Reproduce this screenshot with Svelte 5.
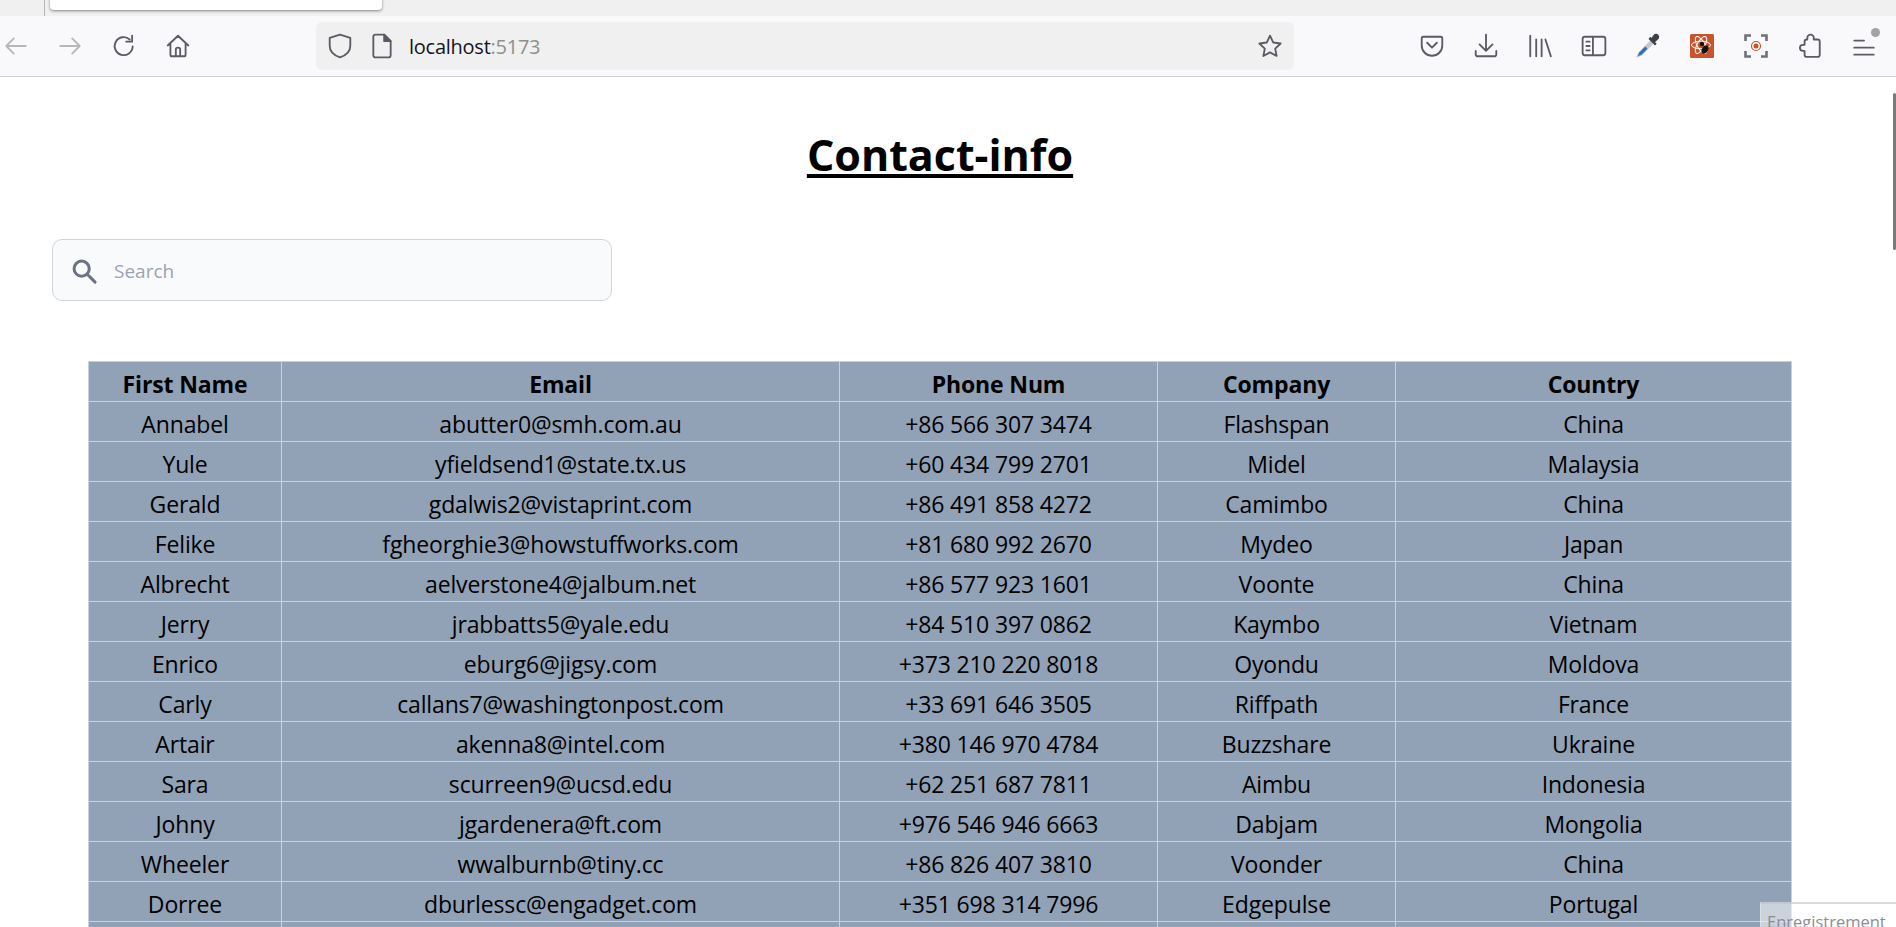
<script>
  const contacts = [
    ["Annabel", "abutter0@smh.com.au", "+86 566 307 3474", "Flashspan", "China"],
    ["Yule", "yfieldsend1@state.tx.us", "+60 434 799 2701", "Midel", "Malaysia"],
    ["Gerald", "gdalwis2@vistaprint.com", "+86 491 858 4272", "Camimbo", "China"],
    ["Felike", "fgheorghie3@howstuffworks.com", "+81 680 992 2670", "Mydeo", "Japan"],
    ["Albrecht", "aelverstone4@jalbum.net", "+86 577 923 1601", "Voonte", "China"],
    ["Jerry", "jrabbatts5@yale.edu", "+84 510 397 0862", "Kaymbo", "Vietnam"],
    ["Enrico", "eburg6@jigsy.com", "+373 210 220 8018", "Oyondu", "Moldova"],
    ["Carly", "callans7@washingtonpost.com", "+33 691 646 3505", "Riffpath", "France"],
    ["Artair", "akenna8@intel.com", "+380 146 970 4784", "Buzzshare", "Ukraine"],
    ["Sara", "scurreen9@ucsd.edu", "+62 251 687 7811", "Aimbu", "Indonesia"],
    ["Johny", "jgardenera@ft.com", "+976 546 946 6663", "Dabjam", "Mongolia"],
    ["Wheeler", "wwalburnb@tiny.cc", "+86 826 407 3810", "Voonder", "China"],
    ["Dorree", "dburlessc@engadget.com", "+351 698 314 7996", "Edgepulse", "Portugal"],
    // next row starts at the fold, its text is below the window
    ["", "", "", "", ""],
  ];
  const headers = ["First Name", "Email", "Phone Num", "Company", "Country"];
</script>

<div class="window">
  <div class="tabstrip">
    <span class="tab-sep"></span>
    <div class="tab"></div>
  </div>

  <div class="toolbar">
    <div class="nav">
      <svg class="ico dim" viewBox="0 0 24 24"><path d="M21 12H3M10 5l-7 7 7 7" /></svg>
      <svg class="ico dim" viewBox="0 0 24 24"><path d="M3 12h18M14 5l7 7-7 7" /></svg>
      <svg class="ico" viewBox="0 0 24 24"><path d="M20 12.500a8.300 8.300 0 1 1-2.700-6.500M19.500 2.500v5.500H14" /></svg>
      <svg class="ico" viewBox="0 0 24 24"><path d="M2.500 11.500 12 2.500l9.500 9M5 9.500V20q0 1.500 1.500 1.500h11q1.500 0 1.500-1.500V9.500M10 21.500V15q0-1.500 2-1.500t2 1.500v6.500" /></svg>
    </div>

    <div class="urlbar">
      <svg class="ico" viewBox="0 0 24 24"><path d="M12 1.500 2.500 4.500v7.500c0 6 5 9 9.500 10.500 4.500-1.500 9.500-4.500 9.500-10.500V4.500z" /></svg>
      <svg class="ico doc" viewBox="0 0 24 24"><path d="M6 1.500h8l6 6V20.500q0 2-2 2H6q-2 0-2-2V3.500q0-2 2-2z" /><path class="fill" d="M14 1.500l6 6h-6z" /></svg>
      <span class="url">localhost<span class="port">:5173</span></span>
      <svg class="ico star" viewBox="0 0 24 24"><path d="M12 2.500l3 6.300 6.800.9-5 4.700 1.300 6.800-6.100-3.300-6.100 3.300 1.300-6.800-5-4.700 6.800-.9z" /></svg>
    </div>

    <div class="tools">
      <svg class="ico" viewBox="0 0 24 24"><path d="M4 3.500h16q1.500 0 1.500 1.500v6.500a9.500 9.500 0 0 1-19 0V5q0-1.500 1.500-1.500zM7.500 9 12 13.500 16.500 9" /></svg>
      <svg class="ico" viewBox="0 0 24 24"><path d="M12 1.500V16M6 10.500l6 6 6-6M2.500 16.500v3q0 2 2 2h15q2 0 2-2v-3" /></svg>
      <svg class="ico" viewBox="0 0 24 24"><path d="M3 2.500v19M8.500 6v15.500M13.500 6v15.500M17 6l5 15.500" /></svg>
      <svg class="ico" viewBox="0 0 24 24"><path d="M3.500 3.500h17q2 0 2 2v13q0 2-2 2h-17q-2 0-2-2v-13q0-2 2-2zM11 3.500v17M5 8h3M5 12h3M5 16h3" /></svg>
      <svg class="ico dropper" viewBox="0 0 24 24">
        <path class="glass" d="M14 7 3 18l-2 5 5-2L17 10z" />
        <path class="blue" d="M9.500 12.500 4 18l-1.500 3.500L6 20l5.500-5.500z" />
        <path class="bulb" d="M12.500 5.500l6 6 1.500-1.500-1.500-1.500 3.500-3.500q1-2-.5-3.500t-3.500-.5L15 4.500 14 3.500z" />
      </svg>
      <svg class="react" viewBox="0 0 24 24">
        <rect width="24" height="24" rx="1.500" fill="#c9532b" />
        <g fill="none" stroke="#fff" stroke-width="1">
          <ellipse cx="11" cy="11" rx="9.500" ry="3.800" />
          <ellipse cx="11" cy="11" rx="9.500" ry="3.800" transform="rotate(60 11 11)" />
          <ellipse cx="11" cy="11" rx="9.500" ry="3.800" transform="rotate(120 11 11)" />
        </g>
        <ellipse cx="15" cy="15.500" rx="3" ry="4.500" fill="#111" transform="rotate(30 15 15.500)" />
        <circle cx="12" cy="10" r="2.200" fill="#111" />
      </svg>
      <svg class="capture" viewBox="0 0 24 24">
        <path d="M7 1.500H1.500V7M17 1.500h5.500V7M7 22.500H1.500V17M17 22.500h5.500V17" />
        <circle class="ring" cx="12" cy="12" r="4.500" />
        <circle class="dot" cx="12" cy="12" r="2.500" />
      </svg>
      <svg class="ico" viewBox="0 0 24 24"><path d="M9.500 6V4.500a3 3 0 0 1 6 0V6h3.500q2 0 2 2v12q0 2-2 2H9q-2 0-2-2v-3.500H5.500a2.800 2.800 0 0 1 0-5.600H7V8q0-2 2-2z" /></svg>
      <div class="menu">
        <svg class="ico" viewBox="0 0 24 24"><path d="M3 7h9M3 13.500h18M3 20h18" /></svg>
        <span class="badge"></span>
      </div>
    </div>
  </div>

  <main class="content">
    <h1>Contact-info</h1>

    <div class="search">
      <svg viewBox="0 0 24 24"><circle cx="10" cy="10" r="6.500" /><path d="m15 15 6.500 6.500" /></svg>
      <input type="text" placeholder="Search" />
    </div>

    <table>
      <colgroup>
        <col style="width: 193px" />
        <col style="width: 558px" />
        <col style="width: 318px" />
        <col style="width: 238px" />
        <col style="width: 396px" />
      </colgroup>
      <thead>
        <tr>
          {#each headers as h}
            <th>{h}</th>
          {/each}
        </tr>
      </thead>
      <tbody>
        {#each contacts as row}
          <tr>
            {#each row as cell}
              <td>{cell}</td>
            {/each}
          </tr>
        {/each}
      </tbody>
    </table>
  </main>

  <div class="scroll-thumb"></div>
  <div class="recording">Enregistrement</div>
</div>

<style>
  :global(body) {
    margin: 0;
    overflow: hidden;
    background: #fff;
  }

  .window {
    position: relative;
    height: 927px;
    overflow: hidden;
    display: flex;
    flex-direction: column;
    font-family: "Open Sans", "Noto Sans", sans-serif;
  }

  .tabstrip {
    height: 16px;
    flex: none;
    background: #f0f0f0;
    display: flex;
    align-items: flex-end;
    padding-left: 44px;
    gap: 5px;
    overflow: hidden;
  }

  .tab-sep {
    width: 1px;
    height: 16px;
    background: #b5b5b8;
  }

  .tab {
    width: 332px;
    height: 26px;
    margin-bottom: 6px;
    background: #fff;
    border-radius: 4px;
    box-shadow: 0 1px 3px rgba(0, 0, 0, 0.45);
  }

  .toolbar {
    height: 61px;
    flex: none;
    box-sizing: border-box;
    background: #f9f9fb;
    border-bottom: 1px solid #cfcfd3;
    display: flex;
    align-items: center;
    padding-left: 3px;
  }

  .ico {
    width: 26px;
    height: 26px;
    flex: none;
    fill: none;
    stroke: #5b5b66;
    stroke-width: 1.700;
    stroke-linejoin: round;
    stroke-linecap: round;
  }

  .ico.dim {
    stroke: #b9b6b8;
  }

  .nav {
    display: flex;
    align-items: center;
    gap: 28px;
    width: 313px;
  }

  .urlbar {
    width: 978px;
    height: 48px;
    background: #f0f0f1;
    border-radius: 6px;
    display: flex;
    align-items: center;
    padding-left: 11px;
    padding-right: 11px;
    box-sizing: border-box;
  }

  .doc {
    margin-left: 16px;
  }

  .doc .fill {
    fill: #5b5b66;
  }

  .url {
    margin-left: 14px;
    font-size: 20px;
    color: #15141a;
    letter-spacing: -0.25px;
  }

  .port {
    color: #8f8f8c;
  }

  .star {
    margin-left: auto;
  }

  .tools {
    display: flex;
    align-items: center;
    gap: 28px;
    margin-left: 125px;
  }

  .dropper {
    stroke: none;
  }

  .dropper .glass {
    fill: #c3c8d0;
  }

  .dropper .blue {
    fill: #2f6fb6;
  }

  .dropper .bulb {
    fill: #3a3f48;
  }

  .react,
  .capture {
    width: 24px;
    height: 24px;
    margin: 0 1px;
    flex: none;
  }

  .capture {
    fill: none;
  }

  .capture path {
    stroke: #6f6f78;
    stroke-width: 2.600;
  }

  .capture .ring {
    stroke: #c9532b;
    stroke-width: 1.200;
  }

  .capture .dot {
    fill: #c9532b;
  }

  .menu {
    position: relative;
    display: flex;
  }

  .badge {
    position: absolute;
    top: -5px;
    right: -3px;
    width: 9px;
    height: 9px;
    border-radius: 50%;
    background: #a3a3a6;
  }

  .content {
    flex: 1;
    min-height: 0;
    display: flex;
    flex-direction: column;
    padding-top: 49px;
  }

  h1 {
    margin: 0;
    text-align: center;
    font-size: 43px;
    line-height: 58px;
    font-weight: 700;
    text-decoration: underline;
    padding-right: 16px;
  }

  .search {
    width: 560px;
    height: 62px;
    margin: 55px 0 0 52px;
    box-sizing: border-box;
    flex: none;
    background: #f9fafb;
    border: 1px solid #d1d5db;
    border-radius: 10px;
    display: flex;
    align-items: center;
    padding-left: 17px;
    padding-top: 1px;
  }

  .search svg {
    width: 28px;
    height: 28px;
    flex: none;
    fill: none;
    stroke: #6b7280;
    stroke-width: 2.600;
    stroke-linecap: round;
  }

  .search input {
    flex: 1;
    margin-left: 14px;
    border: 0;
    outline: 0;
    background: transparent;
    font: inherit;
    font-size: 19px;
  }

  .search input::placeholder {
    color: #9ca3af;
    opacity: 1;
  }

  table {
    width: 1703px;
    margin: 60px 0 0 88px;
    table-layout: fixed;
    border-collapse: collapse;
    background: #91a1b6;
    flex: none;
    font-size: 23px;
    letter-spacing: -0.14px;
  }

  th,
  td {
    height: 40px;
    padding: 5px 0 0;
    box-sizing: border-box;
    border: 1px solid #c9d1dc;
    text-align: center;
    line-height: 32px;
    white-space: nowrap;
    color: #000;
  }

  th {
    font-weight: 700;
  }

  .scroll-thumb {
    position: absolute;
    right: 0;
    top: 93px;
    width: 3px;
    height: 157px;
    background: #7a7a7a;
    border-radius: 2px;
  }

  .recording {
    position: absolute;
    right: 0;
    bottom: 0;
    width: 136px;
    height: 25px;
    box-sizing: border-box;
    padding: 6px 0 0 6px;
    background: rgba(255, 255, 255, 0.52);
    border-top: 2px solid rgba(190, 195, 205, 0.6);
    border-left: 1px solid rgba(255, 255, 255, 0.3);
    font-size: 16.500px;
    line-height: 24px;
    color: #8a8d92;
    overflow: hidden;
    white-space: nowrap;
  }
</style>
